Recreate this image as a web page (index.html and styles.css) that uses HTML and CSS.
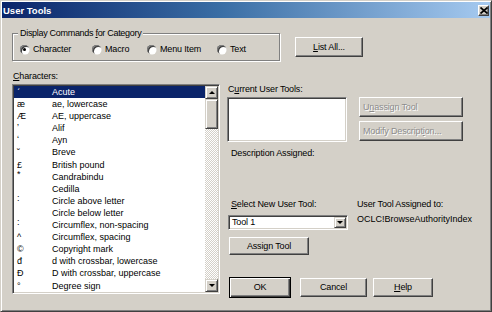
FILE: index.html
```html
<!DOCTYPE html>
<html>
<head>
<meta charset="utf-8">
<link rel="stylesheet" href="styles.css">
</head>
<body>
<div class="window">
  <div class="titlebar">
    <span class="title">User Tools</span>
    <span class="close"><svg width="8" height="7" viewBox="0 0 8 7"><path d="M0.5 0.5 L7.5 6.5 M7.5 0.5 L0.5 6.5" stroke="#000" stroke-width="1.7" fill="none"/></svg></span>
  </div>
  <div class="body">
    <div class="top">
      <div class="group">
        <span class="legend">Display Commands <u>f</u>or Category</span>
        <div class="radios">
          <div class="opt"><span class="radio on"></span>Character</div>
          <div class="opt"><span class="radio"></span>Macro</div>
          <div class="opt"><span class="radio"></span>Menu Item</div>
          <div class="opt"><span class="radio"></span>Text</div>
        </div>
      </div>
      <div class="btn listall"><span><u>L</u>ist All...</span></div>
    </div>
    <div class="main">
      <div class="left">
        <div class="lbl"><u>C</u>haracters:</div>
        <div class="listbox">
          <div class="rows">
            <div class="row sel"><span class="sym">ˊ</span><span>Acute</span></div>
            <div class="row"><span class="sym">æ</span><span>ae, lowercase</span></div>
            <div class="row"><span class="sym">Æ</span><span>AE, uppercase</span></div>
            <div class="row"><span class="sym">ʼ</span><span>Alif</span></div>
            <div class="row"><span class="sym">ʻ</span><span>Ayn</span></div>
            <div class="row"><span class="sym">˘</span><span>Breve</span></div>
            <div class="row"><span class="sym">£</span><span>British pound</span></div>
            <div class="row"><span class="sym hi">*</span><span>Candrabindu</span></div>
            <div class="row"><span class="sym"></span><span>Cedilla</span></div>
            <div class="row"><span class="sym hi">:</span><span>Circle above letter</span></div>
            <div class="row"><span class="sym"></span><span>Circle below letter</span></div>
            <div class="row"><span class="sym hi">:</span><span>Circumflex, non-spacing</span></div>
            <div class="row"><span class="sym">^</span><span>Circumflex, spacing</span></div>
            <div class="row"><span class="sym">©</span><span>Copyright mark</span></div>
            <div class="row"><span class="sym">đ</span><span>d with crossbar, lowercase</span></div>
            <div class="row"><span class="sym">Đ</span><span>D with crossbar, uppercase</span></div>
            <div class="row"><span class="sym">°</span><span>Degree sign</span></div>
          </div>
          <div class="vscroll">
            <div class="sbtn"><span class="tri up"></span></div>
            <div class="thumb"></div>
            <div class="track"></div>
            <div class="sbtn"><span class="tri down"></span></div>
          </div>
        </div>
      </div>
      <div class="right">
        <div class="lbl cur-label">C<u>u</u>rrent User Tools:</div>
        <div class="cur-row">
          <div class="cur-box"></div>
          <div class="side-btns">
            <div class="btn wide disabled">U<u>n</u>assign Tool</div>
            <div class="btn wide disabled">Modify Descript<u>i</u>on...</div>
          </div>
        </div>
        <div class="desc">Description Assigned:</div>
        <div class="select-row">
          <div class="sel-col">
            <div class="sel-label"><u>S</u>elect New User Tool:</div>
            <div class="combo">
              <span class="combo-text">Tool 1</span>
              <span class="combo-btn"><span class="tri down"></span></span>
            </div>
          </div>
          <div class="assigned-col">
            <div class="assigned-label">User Tool Assigned to:</div>
            <div class="assigned-value">OCLC!BrowseAuthorityIndex</div>
          </div>
        </div>
        <div class="btn assign">Assi<u>g</u>n Tool</div>
        <div class="bottom">
          <div class="btn ok">OK</div>
          <div class="btn cancel">Cancel</div>
          <div class="btn help"><span><u>H</u>elp</span></div>
        </div>
      </div>
    </div>
  </div>
</div>
</body>
</html>
```

FILE: styles.css
```css
* { box-sizing: border-box; }
html, body { margin: 0; padding: 0; }
body {
  width: 492px;
  height: 312px;
  overflow: hidden;
  background: #d4d0c8;
  font-family: "Liberation Sans", Arial, sans-serif;
  font-size: 9px;
  letter-spacing: -0.15px;
  color: #000;
}
u { text-decoration: underline; text-underline-offset: 1px; }

.window {
  width: 492px;
  height: 312px;
  border: 1px solid;
  border-color: #d4d0c8 #404040 #404040 #d4d0c8;
  box-shadow: inset 1px 1px #fff, inset -1px -1px #808080;
  padding: 1px;
  background: #d4d0c8;
  display: flex;
  flex-direction: column;
}

.titlebar {
  height: 16px;
  flex: none;
  display: flex;
  align-items: center;
  justify-content: space-between;
  background: linear-gradient(to right, #0a246a 0%, #3a6ea5 45%, #a6caf0 100%);
  padding: 0 1px 0 1px;
}
.title {
  color: #fff;
  font-weight: bold;
  font-size: 9.5px;
  letter-spacing: 0;
}
.close {
  width: 11px;
  height: 11px;
  background: #d4d0c8;
  border: 1px solid;
  border-color: #fff #404040 #404040 #fff;
  box-shadow: inset -1px -1px #808080;
  display: flex;
  align-items: center;
  justify-content: center;
}
.close svg { display: block; }

.body {
  padding: 15px 0 0 10px;
}

.top {
  display: flex;
  align-items: flex-start;
}
.group {
  position: relative;
  width: 268px;
  height: 28px;
  border: 1px solid #808080;
  box-shadow: inset 1px 1px #fff, 1px 1px #fff;
}
.legend {
  position: absolute;
  top: -6px;
  left: 5px;
  padding: 0 2px;
  line-height: 11px;
  background: #d4d0c8;
  white-space: nowrap;
  letter-spacing: -0.3px;
}
.radios {
  display: grid;
  grid-template-columns: 72px 55px 70px auto;
  padding: 10px 0 0 7px;
}
.opt {
  display: flex;
  align-items: center;
  gap: 4px;
  height: 11px;
  line-height: 11px;
  white-space: nowrap;
}
.radio {
  position: relative;
  width: 9px;
  height: 9px;
  border-radius: 50%;
  background: #fff;
  box-shadow: inset 1px 1px 0 #808080, inset 2px 2px 0 #404040, 0.5px 0.5px 0 #fff;
  flex: none;
}
.radio.on::after {
  content: "";
  position: absolute;
  left: 3px;
  top: 3px;
  width: 3px;
  height: 3px;
  border-radius: 50%;
  background: #000;
}

.btn {
  display: flex;
  align-items: center;
  justify-content: center;
  background: #d4d0c8;
  border: 1px solid;
  border-color: #fff #404040 #404040 #fff;
  box-shadow: inset -1px -1px #808080;
  line-height: 11px;
  white-space: nowrap;
}
.listall {
  margin: 4px 0 0 15px;
  width: 68px;
  height: 20px;
}

.main {
  display: flex;
  align-items: flex-start;
  margin-top: 10px;
}
.left { width: 208px; flex: none; }
.lbl {
  line-height: 11px;
  height: 11px;
  margin-bottom: 2px;
  padding-left: 1px;
}
.listbox {
  height: 210px;
  display: flex;
  border: 1px solid;
  border-color: #808080 #fff #fff #808080;
  box-shadow: inset 1px 1px #404040, inset -1px -1px #d4d0c8;
  padding: 1px;
  background: #fff;
}
.rows { flex: 1; overflow: hidden; }
.row {
  display: flex;
  height: 12.1px;
  line-height: 12px;
  white-space: nowrap;
  letter-spacing: 0;
}
.row.sel { background: #0a246a; color: #fff; }
.sym {
  width: 38px;
  flex: none;
  padding-left: 3px;
}
.sym.hi { position: relative; top: -3px; }

.vscroll {
  width: 13px;
  flex: none;
  display: flex;
  flex-direction: column;
}
.sbtn, .thumb, .combo-btn {
  background: #d4d0c8;
  border: 1px solid;
  border-color: #d4d0c8 #404040 #404040 #d4d0c8;
  box-shadow: inset 1px 1px #fff, inset -1px -1px #808080;
}
.sbtn {
  height: 13px;
  flex: none;
  display: flex;
  align-items: center;
  justify-content: center;
}
.thumb { height: 30px; flex: none; }
.track {
  flex: 1;
  background-color: #fff;
  background-image: repeating-conic-gradient(#d4d0c8 0 25%, #fff 0 50%);
  background-size: 2px 2px;
}
.tri {
  width: 0;
  height: 0;
  border-left: 3px solid transparent;
  border-right: 3px solid transparent;
}
.tri.up { border-bottom: 3px solid #000; }
.tri.down { border-top: 3px solid #000; }

.right {
  margin-left: 7px;
  padding-top: 13px;
}
.cur-row {
  display: flex;
  align-items: flex-start;
}
.cur-box {
  width: 120px;
  height: 45px;
  background: #fff;
  border: 1px solid;
  border-color: #808080 #fff #fff #808080;
  box-shadow: inset 1px 1px #404040, inset -1px -1px #d4d0c8;
}
.side-btns {
  margin-left: 12px;
  display: flex;
  flex-direction: column;
  gap: 4px;
}
.btn.wide {
  width: 104px;
  height: 20px;
  justify-content: flex-start;
  padding-left: 3px;
}
.disabled {
  color: #8c8c8c;
  text-shadow: 1px 1px 0 #fff;
}
.desc {
  margin: 6px 0 0 4px;
  line-height: 11px;
  height: 11px;
}
.select-row {
  display: flex;
  margin-top: 40px;
}
.sel-col { width: 121px; flex: none; }
.sel-label {
  padding-left: 4px;
  line-height: 11px;
  height: 11px;
  margin-bottom: 5px;
}
.combo {
  margin-left: 1px;
  width: 120px;
  height: 15px;
  display: flex;
  align-items: stretch;
  background: #fff;
  border: 1px solid;
  border-color: #808080 #fff #fff #808080;
  box-shadow: inset 1px 1px #404040, inset -1px -1px #d4d0c8;
  padding: 1px;
}
.combo-text {
  flex: 1;
  padding-left: 2px;
  line-height: 11px;
}
.combo-btn {
  width: 12px;
  display: flex;
  align-items: center;
  justify-content: center;
}
.assigned-col {
  margin-left: 9px;
  white-space: nowrap;
}
.assigned-label { line-height: 11px; height: 11px; }
.assigned-value { line-height: 11px; margin-top: 4px; letter-spacing: 0; }

.assign {
  margin: 7px 0 0 2px;
  width: 80px;
  height: 18px;
}
.bottom {
  display: flex;
  align-items: flex-start;
  margin: 22px 0 0 2px;
}
.ok {
  width: 62px;
  height: 21px;
  border: 1px solid #000;
  box-shadow: inset 1px 1px #fff, inset -1px -1px #404040, inset -2px -2px #808080;
}
.cancel {
  margin: 1px 0 0 9px;
  width: 67px;
  height: 19px;
}
.help {
  margin: 1px 0 0 6px;
  width: 60px;
  height: 19px;
}
```
